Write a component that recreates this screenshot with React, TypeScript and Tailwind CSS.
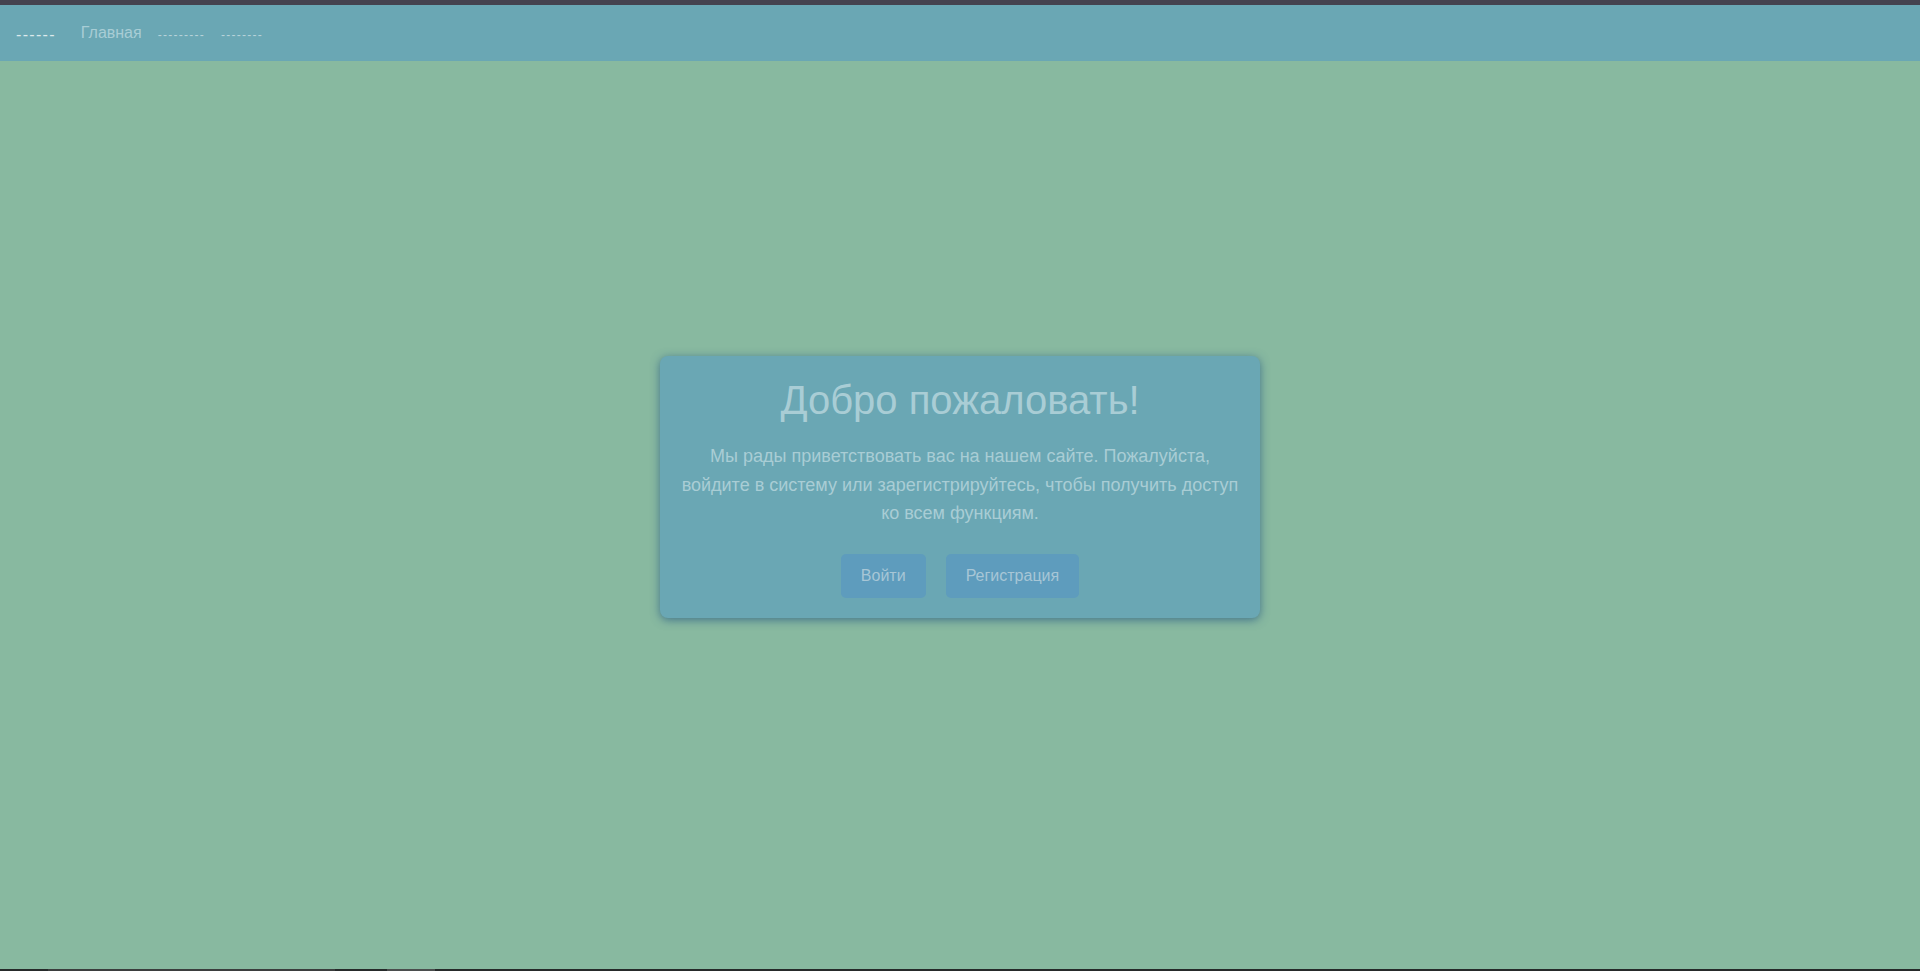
import React from 'react';

const navLinks = [
  { label: 'Главная', kind: 'text' },
  { label: '---------', kind: 'dash' },
  { label: '--------', kind: 'dash' },
];

const App = () => {
  return (
    <div
      className="flex h-[971px] flex-col overflow-hidden bg-[#88b9a0]"
      style={{ fontFamily: '"Liberation Sans", Arial, sans-serif' }}
    >
      {/* window strip */}
      <div className="h-[5px] shrink-0 bg-[#45434f]" />

      {/* Nav */}
      <nav className="flex h-[56px] shrink-0 items-center bg-[#6aa7b4] pl-4">
        <span className="mr-[25px] pt-[3px] text-[16px] tracking-[1.3px] text-[#dce9ec]">------</span>
        <div className="flex items-center gap-4">
          {navLinks.map((link, index) =>
            link.kind === 'text' ? (
              <a key={index} className="text-[16px] text-[#a8cdd5]">
                {link.label}
              </a>
            ) : (
              <a key={index} className="pt-[3px] text-[12px] tracking-[1.25px] text-[#b7d3da]">
                {link.label}
              </a>
            )
          )}
        </div>
      </nav>

      {/* Main */}
      <main className="flex flex-1 items-center justify-center pb-[56px]">
        <div className="w-[600px] rounded-lg bg-[#6aa7b4] p-5 text-center shadow-[0_2px_10px_rgba(35,85,130,0.7)]">
          <h1 className="text-[40px] leading-[48px] text-[#a9cdd5]">Добро пожаловать!</h1>
          <p className="mt-[18px] text-[18px] leading-[28.8px] text-[#a9cdd5]">
            Мы рады приветствовать вас на нашем сайте. Пожалуйста, войдите в систему или
            зарегистрируйтесь, чтобы получить доступ ко всем функциям.
          </p>
          <div className="mt-[26px] flex justify-center gap-5">
            <button className="h-[44px] rounded-[5px] bg-[#5e9cbd] px-5 text-[16px] text-[#a7c6d6]">
              Войти
            </button>
            <button className="h-[44px] rounded-[5px] bg-[#5e9cbd] px-5 text-[16px] text-[#a7c6d6]">
              Регистрация
            </button>
          </div>
        </div>
      </main>

      {/* bottom scrollbar strip */}
      <div className="flex h-[2px] shrink-0 bg-[#262a2a]">
        <div className="ml-[48px] w-[287px] bg-[#3b3e3e]" />
        <div className="ml-[52px] w-[48px] bg-[#4b4e4e]" />
      </div>
    </div>
  );
};

export default App;
